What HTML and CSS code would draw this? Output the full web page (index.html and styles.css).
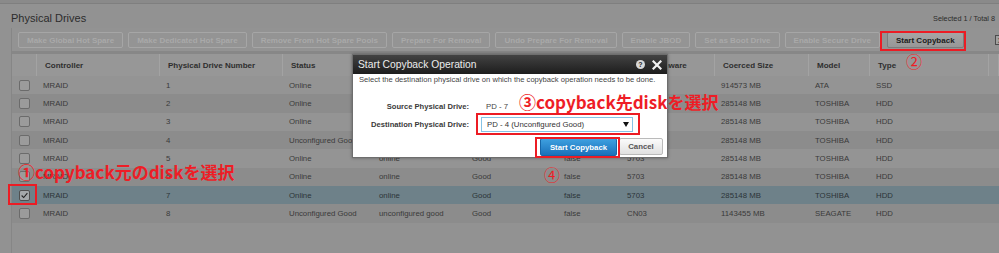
FILE: index.html
```html
<!DOCTYPE html>
<html lang="ja">
<head>
<meta charset="utf-8">
<title>Physical Drives</title>
<link rel="stylesheet" href="styles.css">
</head>
<body>
<div class="app">
  <div class="topline"></div>
  <div class="head">
    <h1 class="title">Physical Drives</h1>
    <span class="count">Selected 1 / Total 8</span>
  </div>
  <div class="panel">
    <div class="toolbar">
      <span class="btn">Make Global Hot Spare</span>
      <span class="btn">Make Dedicated Hot Spare</span>
      <span class="btn">Remove From Hot Spare Pools</span>
      <span class="btn">Prepare For Removal</span>
      <span class="btn">Undo Prepare For Removal</span>
      <span class="btn">Enable JBOD</span>
      <span class="btn">Set as Boot Drive</span>
      <span class="btn">Enable Secure Drive</span>
      <span class="btn btn-active">Start Copyback</span>
      <span class="tool-icon">X</span>
    </div>
    <div class="grid">
      <div class="hrow">
        <span></span><span>Controller</span><span>Physical Drive Number</span><span>Status</span><span>State</span><span>Health</span><span>Foreign</span><span>Drive Firmware</span><span>Coerced Size</span><span>Model</span><span>Type</span><span></span>
      </div>
      <div class="row odd"><span><i class="cb"></i></span><span>MRAID</span><span>1</span><span>Online</span><span>online</span><span>Good</span><span>false</span><span>0003</span><span>914573 MB</span><span>ATA</span><span>SSD</span><span></span></div>
      <div class="row even"><span><i class="cb"></i></span><span>MRAID</span><span>2</span><span>Online</span><span>online</span><span>Good</span><span>false</span><span>5703</span><span>285148 MB</span><span>TOSHIBA</span><span>HDD</span><span></span></div>
      <div class="row odd"><span><i class="cb"></i></span><span>MRAID</span><span>3</span><span>Online</span><span>online</span><span>Good</span><span>false</span><span>5703</span><span>285148 MB</span><span>TOSHIBA</span><span>HDD</span><span></span></div>
      <div class="row even"><span><i class="cb"></i></span><span>MRAID</span><span>4</span><span>Unconfigured Good</span><span>unconfigured good</span><span>Good</span><span>false</span><span>5703</span><span>285148 MB</span><span>TOSHIBA</span><span>HDD</span><span></span></div>
      <div class="row odd"><span><i class="cb"></i></span><span>MRAID</span><span>5</span><span>Online</span><span>online</span><span>Good</span><span>false</span><span>5703</span><span>285148 MB</span><span>TOSHIBA</span><span>HDD</span><span></span></div>
      <div class="row even"><span><i class="cb"></i></span><span>MRAID</span><span>6</span><span>Online</span><span>online</span><span>Good</span><span>false</span><span>5703</span><span>285148 MB</span><span>TOSHIBA</span><span>HDD</span><span></span></div>
      <div class="row selected"><span><i class="cb checked"><svg viewBox="0 0 11 11" width="9" height="9"><path d="M2 5.5 L4.5 8 L9 2.5" fill="none" stroke="#222" stroke-width="1.3"/></svg></i></span><span>MRAID</span><span>7</span><span>Online</span><span>online</span><span>Good</span><span>false</span><span>5703</span><span>285148 MB</span><span>TOSHIBA</span><span>HDD</span><span></span></div>
      <div class="row even"><span><i class="cb"></i></span><span>MRAID</span><span>8</span><span>Unconfigured Good</span><span>unconfigured good</span><span>Good</span><span>false</span><span>CN03</span><span>1143455 MB</span><span>SEAGATE</span><span>HDD</span><span></span></div>
    </div>
  </div>

  <div class="modal">
    <div class="modal-title">
      <span>Start Copyback Operation</span>
      <span class="modal-icons">
        <span class="help">?</span>
        <svg class="close" viewBox="0 0 10 10" width="10" height="10"><path d="M1.5 1.5 L8.5 8.5 M8.5 1.5 L1.5 8.5" stroke="#f2f2f2" stroke-width="2.2" stroke-linecap="square"/></svg>
      </span>
    </div>
    <div class="modal-desc">Select the destination physical drive on which the copyback operation needs to be done.</div>
    <div class="form">
      <span class="label">Source Physical Drive:</span>
      <span class="value">PD - 7</span>
      <span class="label">Destination Physical Drive:</span>
      <span class="select"><span>PD - 4 (Unconfigured Good)</span><i class="arrow"></i></span>
    </div>
    <div class="actions">
      <span class="mbtn primary">Start Copyback</span>
      <span class="mbtn">Cancel</span>
    </div>
  </div>

  <div class="mark mark-check"></div>
  <div class="mark mark-tool"></div>
  <div class="mark mark-select"></div>
  <div class="mark mark-start"></div>
  <div class="note note1">①copyback元のdiskを選択</div>
  <div class="note note3">③copyback先diskを選択</div>
  <div class="num num2">②</div>
  <div class="num num4">④</div>
</div>
</body>
</html>
```
FILE: styles.css
```css
* { box-sizing: border-box; }
body { margin: 0; background: #929292; font-family: "Liberation Sans", Arial, sans-serif; }
.app { position: relative; width: 999px; height: 253px; overflow: hidden; background: #929292; display: flex; flex-direction: column; }
.topline { height: 4px; background: #8a8a8a; border-bottom: 1px solid #7f7f7f; flex: none; }
.head { height: 24px; flex: none; padding: 4px 4px 0 11px; display: flex; justify-content: space-between; align-items: center; }
.title { margin: 0; font-size: 11px; font-weight: normal; color: #2c2c2c; }
.count { font-size: 7.3px; color: #2c2c2c; }
.panel { flex: 1; margin-left: 11px; border-left: 1px solid #868686; }
.toolbar { height: 26px; padding: 4px 0 0 6px; display: flex; gap: 5px; align-items: flex-start; background: #939393; border-bottom: 3px solid #878787; }
.btn { height: 16px; padding: 0 8px; display: flex; align-items: center; white-space: nowrap; font-size: 8px; font-weight: bold; color: #a9a9a9; background: #949494; border: 1px solid #a6a6a6; border-radius: 2px; }
.btn-active { margin-left: 2px; color: #1c1c1c; border-color: #7c7c7c; background: linear-gradient(#a5a5a5, #979797); }
.tool-icon { margin-left: 26px; margin-top: 3px; width: 11px; height: 10px; flex: none; border: 1px solid #4c4c4c; background: #a0a0a0; font-size: 7px; color: #333; display: flex; align-items: center; justify-content: center; }
.grid { display: flex; flex-direction: column; }
.hrow, .row { display: grid; grid-template-columns: 25px 123px 123px 90px 93px 92px 63px 94px 94px 61px 119px 1fr; }
.hrow { height: 22px; background: #979797; font-size: 8px; font-weight: bold; color: #2e2e2e; }
.hrow > span { display: flex; align-items: center; padding-left: 8px; border-right: 1px solid #a3a3a3; white-space: nowrap; }
.row { height: 18.33px; font-size: 7.8px; color: #3a3a3a; }
.row > span { display: flex; align-items: center; padding-left: 6px; white-space: nowrap; }
.row > span:first-child { padding-left: 7px; }
.odd { background: #949494; }
.even { background: #8c8c8c; }
.selected { background: #6e8189; color: #2c3438; }
.cb { width: 11px; height: 11px; border: 1px solid #6b6b6b; border-radius: 2px; background: #9b9b9b; display: flex; align-items: center; justify-content: center; }
.cb.checked { background: #a4a8aa; border-color: #4f4f4f; }

.modal { position: absolute; left: 352px; top: 54px; width: 316px; background: #fff; border: 1px solid #6e6e6e; box-shadow: 0 0 3px rgba(0,0,0,0.35); }
.modal-title { height: 19px; padding: 0 5px; display: flex; align-items: center; justify-content: space-between; background: linear-gradient(#424242, #1d1d1d); color: #ececec; font-size: 10.3px; }
.modal-icons { display: flex; align-items: center; gap: 7px; }
.help { width: 9px; height: 9px; border-radius: 50%; background: #d8d8d8; color: #222; font-size: 7px; font-weight: bold; display: flex; align-items: center; justify-content: center; }
.modal-desc { padding: 1px 0 0 6px; line-height: 10px; font-size: 7.6px; color: #444; white-space: nowrap; overflow: hidden; }
.form { margin-top: 14px; display: grid; grid-template-columns: 116px 1fr; column-gap: 12px; row-gap: 3px; grid-auto-rows: 15px; }
.label { display: flex; align-items: center; justify-content: flex-end; font-size: 7.6px; font-weight: bold; color: #3a3a3a; white-space: nowrap; }
.value { display: flex; align-items: center; padding-left: 5px; font-size: 7.8px; color: #444; }
.select { width: 152px; height: 15px; border: 1px solid #86c3e6; display: flex; align-items: center; justify-content: space-between; padding: 0 3px 0 5px; font-size: 7.8px; color: #333; }
.arrow { width: 0; height: 0; border-left: 3.5px solid transparent; border-right: 3.5px solid transparent; border-top: 5px solid #111; }
.actions { margin-top: 6px; padding-right: 4px; display: flex; justify-content: flex-end; align-items: flex-start; gap: 2px; height: 19px; }
.mbtn { width: 44px; height: 17px; display: flex; align-items: center; justify-content: center; font-size: 7.8px; font-weight: bold; color: #555; background: linear-gradient(#fbfbfb, #e1e1e1); border: 1px solid #bababa; border-radius: 2px; }
.mbtn.primary { width: 77px; height: 18px; color: #fff; background: linear-gradient(#3ea0e0, #1a71ba); border-color: #1766a8; }

.mark { position: absolute; border: 2px solid #ec1c24; }
.mark-check { left: 8px; top: 184px; width: 29px; height: 21px; }
.mark-tool { left: 880px; top: 31px; width: 86px; height: 20px; }
.mark-select { left: 476px; top: 113px; width: 164px; height: 22px; }
.mark-start { left: 535px; top: 137px; width: 85px; height: 21px; }
.note { position: absolute; color: #ee1d26; font-family: "Noto Sans CJK JP", sans-serif; font-weight: bold; font-size: 17px; line-height: 20px; white-space: nowrap; }
.note1 { left: 18px; top: 162px; }
.note3 { left: 519px; top: 92px; }
.num { position: absolute; color: #ee1d26; font-family: "Noto Sans CJK JP", sans-serif; font-size: 16px; line-height: 20px; }
.num2 { left: 906px; top: 51px; }
.num4 { left: 544px; top: 164px; }
```
